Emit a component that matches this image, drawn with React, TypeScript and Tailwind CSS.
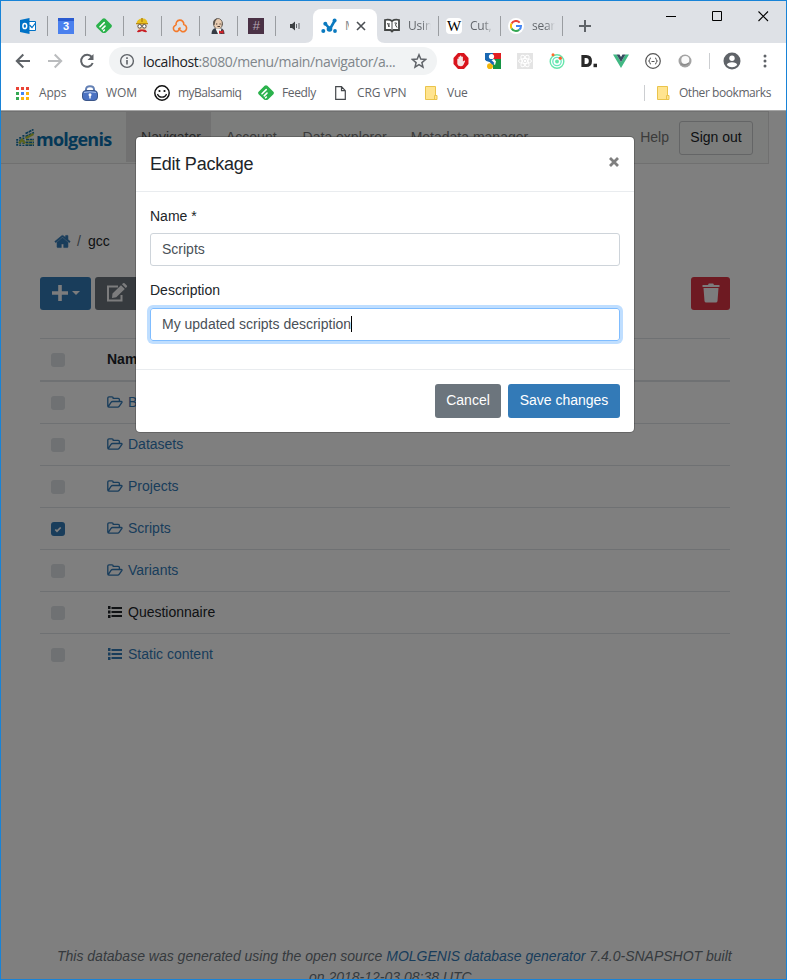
import React, { ReactNode } from "react";

type KidProps = { children?: ReactNode };

const Svg = ({ w = 16, h = 16, className = "", children }: KidProps & { w?: number; h?: number; className?: string }) => (
  <svg width={w} height={h} viewBox={`0 0 ${w} ${h}`} className={`block shrink-0 ${className}`} fill="none">
    {children}
  </svg>
);

/* ---------- favicons ---------- */
const Outlook = () => (
  <Svg>
    <path d="M8 3.500h7.500v9H8z" fill="#fff" stroke="#0072c6" />
    <path d="M9.500 7l2.500 2.500L15.500 5" stroke="#0072c6" strokeWidth="1.200" />
    <path d="M0 2l9.500-2v16L0 14z" fill="#0072c6" />
    <ellipse cx="4.800" cy="8" rx="1.900" ry="2.600" stroke="#fff" strokeWidth="1.500" />
  </Svg>
);
const Calendar = () => (
  <span className="flex h-4 w-4 flex-col items-center bg-[#4a80ee] pt-px shadow-[inset_0_3px_0_#2a5bd0]">
    <span className="font-['Liberation_Sans',sans-serif] text-[11px] font-bold leading-[15px] text-white">3</span>
  </span>
);
const Feedly = () => (
  <Svg>
    <path d="M6.600.800q1.400-1.200 2.800 0l6 6q1 1.200 0 2.400L10 14.600q-.4.400-1 .4H7q-.6 0-1-.4L.6 9.200q-1-1.200 0-2.400z" fill="#2bb24c" />
    <path d="M4 8.800L8.200 4.600M6.200 10.800l2.800-2.700M7.600 12.800l.8-.8" stroke="#fff" strokeWidth="1.600" strokeLinecap="round" />
  </Svg>
);
const Builder = () => (
  <Svg>
    <circle cx="8" cy="8.500" r="4.800" fill="#e9c49c" />
    <path d="M2.500 6Q2.500 1 8 .500T13.500 6z" fill="#e8c020" />
    <path d="M7.200 0h1.600v4H7.200zM2 5h12v1.200H2z" fill="#b98b12" />
    <circle cx="5.700" cy="8.300" r="1.800" fill="#fff" stroke="#555" /><circle cx="10.300" cy="8.300" r="1.800" fill="#fff" stroke="#555" />
    <path d="M3 14q.5-3 5-2.500 4.500-.5 5 2.500-3 .500-5-1-2 1.500-5 1z" fill="#c81e24" />
  </Svg>
);
const CloudLoop = () => (
  <Svg>
    <path d="M4.200 7.200A3.900 3.900 0 1 1 11.800 6.500a3.600 3.600 0 1 1-1.800 7.100L8 12l-1.500-2M8.500 9.500L6 13a3.100 3.100 0 1 1-1.800-5.800" stroke="#f47a2b" strokeWidth="1.600" />
  </Svg>
);
const Butler = () => (
  <Svg>
    <path d="M1.500 16q0-5 4-6h5q4 1 4 6z" fill="#353b44" />
    <ellipse cx="8" cy="5.800" rx="4.500" ry="5.300" fill="#e8cbb0" stroke="#5a534d" strokeWidth=".8" />
    <path d="M3.300 7Q2.300 1 7.500.300 4.500 3 4.500 7zM12 3.500l.8 3-1.300 1.500z" fill="#5a534d" />
    <path d="M6 6h1.300M9.500 6h1.300M7.500 8.500H10" stroke="#4b3a33" />
    <path d="M5.500 10.500L8 16h2l1.500-5.500z" fill="#f5f5f5" />
    <path d="M9 12.500l2 .8 2.500-1.300v4l-2.500-1-2 1z" fill="#d4232a" />
  </Svg>
);
const Hash = () => (
  <span className="flex h-4 w-4 items-center justify-center bg-[#4a3145]">
    <span className="font-['Liberation_Sans',sans-serif] text-[13px] italic leading-4 text-[#b3a3b0]">#</span>
  </span>
);
const Speaker = () => (
  <Svg w={11} h={10}>
    <path d="M0 3h2l3-2.500v9L2 7H0z" fill="#3c4043" />
    <path d="M6.500 3v4M9 2v6" stroke="#5f6368" />
  </Svg>
);
const MolgenisMark = () => (
  <Svg>
    <path d="M4.500 6l4.500 5 4.500-8" stroke="#0b7abf" strokeWidth="2.600" />
    <g fill="#0b7abf">
      <circle cx="2.300" cy="13" r="2" /><circle cx="4.300" cy="5.800" r="2" /><circle cx="8.500" cy="11" r="2.800" />
      <circle cx="13.600" cy="2.500" r="2" /><circle cx="14" cy="13" r="1.900" />
    </g>
  </Svg>
);
const BookMark = () => (
  <Svg>
    <path d="M1 2q4-1 7 1 3-2 7-1v10H9.500L8 13.500 6.500 12H1z" fill="#fff" stroke="#444746" strokeWidth="1.800" />
    <path d="M8 3v10M3.500 5L5 9V5M10.500 5h2l-1 2 1.500 2.500" stroke="#444746" />
  </Svg>
);
const Wiki = () => (
  <span className="flex h-4 w-4 items-center justify-center rounded-sm bg-white">
    <span className="font-['Liberation_Serif',serif] text-[15px] leading-4 text-black">W</span>
  </span>
);
const GoogleG = () => (
  <span className="flex h-4 w-4 items-center justify-center rounded-full bg-white">
    <Svg w={12} h={12}>
      <path d="M1.600 3.500A5 5 0 0 1 9.700 2.600" stroke="#ea4335" strokeWidth="2" />
      <path d="M1.600 3.500a5 5 0 0 0 0 5" stroke="#fbbc05" strokeWidth="2" />
      <path d="M1.600 8.500a5 5 0 0 0 7.600 1.200" stroke="#34a853" strokeWidth="2" />
      <path d="M6 6h5q0 2.500-1.800 3.700" stroke="#4285f4" strokeWidth="2" />
    </Svg>
  </span>
);

/* ---------- toolbar and bookmark icons ---------- */
const Arrow = ({ color, flip = false }: { color: string; flip?: boolean }) => (
  <Svg className={flip ? "rotate-180" : ""}>
    <path d="M15 8H2M8.300 1.500L1.800 8l6.500 6.500" stroke={color} strokeWidth="2" />
  </Svg>
);
const Reload = () => (
  <Svg>
    <path d="M12.800 4A6 6 0 1 0 13.700 10" stroke="#5f6368" strokeWidth="2" />
    <path d="M14.500 1v6H8.500z" fill="#5f6368" />
  </Svg>
);
const Info = () => (
  <Svg>
    <circle cx="8" cy="8" r="6.400" stroke="#5f6368" strokeWidth="1.400" />
    <path d="M8 7v4.500M8 4.300v1.600" stroke="#5f6368" strokeWidth="1.600" />
  </Svg>
);
const Star = () => (
  <Svg>
    <path d="M8 1.800l1.800 4.300 4.700.400-3.600 3.100 1.100 4.600L8 11.700l-4 2.500 1.100-4.600-3.600-3.100 4.700-.400z" stroke="#5f6368" strokeWidth="1.500" />
  </Svg>
);
const AdBlock = () => (
  <Svg>
    <path d="M5 0h6l4.500 5v6L11 16H5L.5 11V5z" fill="#d9141c" />
    <path d="M4.300 6q.7-1 1.200 0V4q.8-1 1.400 0V3q.8-1 1.500 0v1q.8-1 1.500 0v4.500l1.400-1q1 0 .7 1L10.300 12q-.8 1.300-2.500 1.300-3 0-3.500-2.300z" fill="#f6e4e4" />
  </Svg>
);
const GoogleSquare = () => (
  <Svg>
    <path d="M0 0h8v8H0z" fill="#1967b2" /><path d="M8 0h8v6H8z" fill="#e11d21" />
    <path d="M8 6h8v10H8z" fill="#159444" /><path d="M0 7h8v9H0z" fill="#fff" />
    <circle cx="6.500" cy="3.500" r="2.600" fill="#fff" /><circle cx="5" cy="13.200" r="3" fill="#f4b60b" />
    <path d="M7 7l2-1 2 2.500-1 3.500-3-2z" fill="#fff" /><path d="M1 6.500L5.500 8 8.500 11" stroke="#1967b2" strokeWidth="2.600" />
  </Svg>
);
const ReactOff = () => (
  <Svg>
    <path d="M0 0h16v16H0z" fill="#e4e4e4" />
    <g stroke="#fff"><ellipse cx="8" cy="8" rx="6.500" ry="2.500" /><ellipse cx="8" cy="8" rx="6.500" ry="2.500" transform="rotate(60 8 8)" /><ellipse cx="8" cy="8" rx="6.500" ry="2.500" transform="rotate(120 8 8)" /></g>
    <circle cx="8" cy="8" r="1.200" fill="#fff" />
  </Svg>
);
const Orbit = () => (
  <Svg>
    <circle cx="8" cy="8.500" r="6.800" stroke="#68e6aa" strokeWidth="1.400" />
    <circle cx="8" cy="8.500" r="4.200" stroke="#68e6c0" strokeWidth="1.300" />
    <circle cx="8" cy="8.500" r="1.900" fill="#68e6aa" />
    <circle cx="4" cy="1.700" r="1.500" fill="#ff6a2b" /><circle cx="11.300" cy="5.200" r="1.600" fill="#ff5a2b" />
  </Svg>
);
const DDot = () => (
  <Svg>
    <path d="M2 3.500h3.200q4.200 0 4.200 4.500t-4.200 4.500H2z" stroke="#292929" strokeWidth="3.200" /><path d="M12.500 10.700H16v3.500h-3.500z" fill="#292929" />
  </Svg>
);
const VueMark = () => (
  <Svg>
    <path d="M0 1.500h3.500L8 9l4.500-7.500H16L8 15z" fill="#41b883" /><path d="M3.500 1.500H6.500L8 4l1.500-2.500h3L8 9z" fill="#35495e" />
  </Svg>
);
const Braces = () => (
  <Svg>
    <circle cx="8" cy="8" r="7.300" stroke="#555" strokeWidth="1.200" />
    <path d="M6 5q-1.300 0-1.300 1.500T3.500 8q1.200 0 1.200 1.500T6 11M10 5q1.300 0 1.300 1.500T12.500 8q-1.200 0-1.200 1.500T10 11M6.500 8.500h3" stroke="#555" />
  </Svg>
);
const Orb = () => (
  <Svg>
    <circle cx="8" cy="8" r="6.500" fill="#a3a3a3" /><circle cx="8.300" cy="7" r="4" fill="#fafafa" /><path d="M3.500 10.500q4 3 8.500-.5" stroke="#8b8b8b" strokeWidth="1.500" />
  </Svg>
);
const Avatar = () => (
  <Svg w={18} h={18}>
    <circle cx="9" cy="9" r="8.500" fill="#5f6368" /><circle cx="9" cy="6.300" r="2.700" fill="#fff" /><path d="M3.800 13Q4.500 10.300 9 10.300T14.200 13Q12 15.200 9 15.200T3.800 13z" fill="#fff" />
  </Svg>
);
const Dots = () => (
  <Svg w={4} h={14}><circle cx="2" cy="2" r="1.500" fill="#5f6368" /><circle cx="2" cy="7" r="1.500" fill="#5f6368" /><circle cx="2" cy="12" r="1.500" fill="#5f6368" /></Svg>
);
const appColors = ["#ea4335", "#ea4335", "#ea4335", "#34a853", "#4285f4", "#fbb30b", "#34a853", "#fbb30b", "#fbb30b"];
const AppsGrid = () => (
  <Svg w={13} h={13}>{appColors.map((c, i) => <rect key={i} x={(i % 3) * 5} y={Math.floor(i / 3) * 5} width="3" height="3" fill={c} />)}</Svg>
);
const Lock = () => (
  <Svg>
    <path d="M4 7V4.500Q4 1.200 8 1.200t4 3.300V7" stroke="#6481b5" strokeWidth="2" /><rect x=".5" y="5.500" width="15" height="10" rx="3.500" fill="#4b72c2" stroke="#3b5688" />
    <path d="M2 7.500q6-1.500 12 0" stroke="#a9c0e8" /><circle cx="8" cy="9.800" r="1.500" fill="#fff" /><path d="M7.300 10h1.400v3.500H7.300z" fill="#fff" />
  </Svg>
);
const Smiley = () => (
  <Svg>
    <circle cx="8" cy="8" r="7.200" fill="#fff" stroke="#111" strokeWidth="1.500" /><circle cx="5.500" cy="6" r="1.100" fill="#111" /><circle cx="10.500" cy="6" r="1.100" fill="#111" />
    <path d="M3.500 9q1 3.200 4.500 3.200T12.500 9" stroke="#111" strokeWidth="1.300" />
  </Svg>
);
const FileIcon = () => <Svg w={11} h={14}><path d="M.7.700H6.500l3.800 4v8.600H.7zM6.500.700v4h3.800" stroke="#45484c" strokeWidth="1.200" /></Svg>;
const FolderNote = () => (
  <Svg w={13} h={14}><path d="M.5.500h10v9h1.500v4H.5z" fill="#ffe48f" stroke="#eac44c" /><path d="M9.500 13V9.500h2" stroke="#eac44c" /></Svg>
);

/* ---------- page icons ---------- */
const Home = () => (
  <svg width="17" height="17" viewBox="0 0 1792 1792" fill="currentColor" className="block">
    <path d="M1472 992v480q0 26-19 45t-45 19h-384v-384h-256v384h-384q-26 0-45-19t-19-45v-480q0-1 .5-3t.5-3l575-474 575 474q1 2 1 6zm223-69l-62 74q-8 9-21 11h-3q-13 0-21-7l-692-577-692 577q-12 8-24 7-13-2-21-11l-62-74q-8-10-7-23.500t11-21.500l719-599q32-26 76-26t76 26l244 204v-195q0-14 9-23t23-9h192q14 0 23 9t9 23v408l219 182q10 8 11 21.500t-7 23.500z" stroke="currentColor" strokeWidth="60" />
  </svg>
);
const FolderOpen = () => (
  <Svg w={16} h={12}>
    <path d="M.8 10V2Q.8.800 2 .800h3q1.200 0 1.200 1.200v.300h5q1.200 0 1.200 1.200V5M1.200 10.600L4 6.300q.6-.8 1.600-.8h8.600q1.300 0 .6 1.100l-2.500 3.600q-.6.900-1.600.9H1.800q-1 0-1-1.100" stroke="currentColor" strokeWidth="1.350" />
  </Svg>
);
const ListIcon = () => (
  <Svg w={14} h={12}><path d="M0 0h2.500v3H0zM0 4.500h2.500v3H0zM0 9h2.500v3H0zM3.500 1H14v2H3.500zM3.500 5H14v2H3.500zM3.500 9H14v2H3.500z" fill="currentColor" /></Svg>
);
const EditIcon = () => (
  <Svg w={22} h={20}>
    <path d="M12 3.500H2v14h13.500V12" stroke="#f8f9fa" strokeWidth="2" />
    <path d="M6.500 10.500L15 2.200l3.800 3.700-8.600 8.300-4.200.800zM16 1.200l1-.900q.8-.500 1.500 0l2.300 2.300q.6.800 0 1.500l-1 .9z" fill="#f8f9fa" />
  </Svg>
);
const Trash = () => (
  <Svg w={18} h={20}><path d="M.5 2H6l.8-1.500h4.400L12 2h5.500v2H.5zM1.500 5h15l-1 13q-.2 1.500-1.700 1.500H4.200q-1.500 0-1.700-1.500z" fill="#f8f9fa" /></Svg>
);
const LogoBars = () => (
  <Svg w={20} h={18}>
    <path d="M1.200 10v7M4.200 8v9M7.400 6v11" stroke="#1273a8" strokeWidth="2" strokeDasharray="1.800 .7" />
    <path d="M9.500 4.500l8-4M9.500 7.500l8.500-4M10 10.500h8M9.500 13.300H18M9.500 16.200H18" stroke="#1273a8" strokeWidth="1.700" strokeDasharray="3 .6" />
    <path d="M3 14.500l3-4 3 4M9.500 9.300L17.500 5" stroke="#b7c83a" strokeWidth="2.200" />
    <path d="M10 11.900h8M10 14.800h8" stroke="#b7c83a" strokeWidth=".9" />
  </Svg>
);

const Cell = ({ children }: KidProps) => (
  <div className="flex h-8 w-[38px] shrink-0 items-center"><div className="flex w-[37px] justify-center pr-px">{children}</div><div className="h-5 w-px bg-[#9a9da1]" /></div>
);
const TextTab = ({ icon, label }: { icon: ReactNode; label: string }) => (
  <div className="flex h-8 w-[62px] shrink-0 items-center">
    <div className="ml-[7px]">{icon}</div>
    <span className="ml-2 w-[23px] overflow-hidden bg-linear-to-r from-[#5f6368] from-60% to-[#dee1e6] bg-clip-text text-xs tracking-[-0.2px] whitespace-nowrap text-transparent">{label}</span>
    <div className="ml-auto h-5 w-px bg-[#9a9da1]" />
  </div>
);

function TabBar() {
  return (
    <div className="relative flex h-[42px] shrink-0 items-end bg-[#dee1e6]">
      <div className="flex h-[34px] items-center pl-[9px]">
        <Cell><Outlook /></Cell><Cell><Calendar /></Cell><Cell><Feedly /></Cell><Cell><Builder /></Cell>
        <Cell><CloudLoop /></Cell><Cell><Butler /></Cell><Cell><Hash /></Cell>
        <div className="flex w-[37px] justify-center pl-px"><Speaker /></div>
      </div>
      <div className="relative flex h-[34px] w-16 shrink-0 items-center rounded-t-lg bg-white pl-2">
        <svg className="absolute bottom-0 -left-2" width="8" height="8"><path d="M8 0v8H0q8 0 8-8z" fill="#fff" /></svg>
        <svg className="absolute -right-2 bottom-0" width="8" height="8"><path d="M0 0v8h8Q0 8 0 0z" fill="#fff" /></svg>
        <MolgenisMark />
        <span className="ml-2 w-[4px] overflow-hidden text-xs text-[#85888c]">M</span>
        <Svg w={10} h={10} className="ml-[7px]"><path d="M1 1l8 8M9 1L1 9" stroke="#4b4f53" strokeWidth="1.600" /></Svg>
      </div>
      <div className="flex h-[34px] items-center">
        <TextTab icon={<BookMark />} label="Using" />
        <TextTab icon={<Wiki />} label="Cut," />
        <TextTab icon={<GoogleG />} label="sear" />
        <Svg w={12} h={12} className="ml-4"><path d="M6 0v12M0 6h12" stroke="#5f6368" strokeWidth="2" /></Svg>
      </div>
      <div className="mb-[21px] ml-auto flex items-center gap-9 pr-[17px]">
        <Svg w={11} h={12}><path d="M1 6.500h10" stroke="#000" /></Svg>
        <Svg w={10} h={12}><path d="M.5 1.500h9v9h-9z" stroke="#000" /></Svg>
        <Svg w={11} h={12}><path d="M.5 1.500l9.500 9.500M10 1.500L.5 11" stroke="#000" strokeWidth="1.100" /></Svg>
      </div>
    </div>
  );
}

function Toolbar() {
  return (
    <div className="flex h-9 shrink-0 items-center bg-white pl-[14px]">
      <div className="flex gap-4"><Arrow color="#5f6368" /><Arrow color="#babcbe" flip /><Reload /></div>
      <div className="ml-[14px] flex h-7 w-[328px] shrink-0 items-center rounded-full bg-[#f1f3f4] pr-[10px] pl-[10px]">
        <Info />
        <span className="ml-2 text-[14px] tracking-[-0.35px] whitespace-nowrap text-[#80868b]"><span className="text-[#202124]">localhost</span>:8080/menu/main/navigator/a...</span>
        <div className="ml-auto"><Star /></div>
      </div>
      <div className="ml-4 flex items-center gap-4"><AdBlock /><GoogleSquare /><ReactOff /><Orbit /><DDot /><VueMark /><Braces /><Orb /></div>
      <div className="ml-4 h-4 w-px bg-[#ccced1]" />
      <div className="ml-[13px]"><Avatar /></div>
      <div className="ml-[22px]"><Dots /></div>
    </div>
  );
}

const Bookmark = ({ icon, label, cls }: { icon: ReactNode; label: string; cls: string }) => (
  <div className={`flex shrink-0 items-center whitespace-nowrap ${cls}`}>{icon}<span>{label}</span></div>
);

function Bookmarks() {
  return (
    <div className="flex h-8 shrink-0 items-center border-b border-[#a5a5a5] bg-white pb-[3px] pl-[15px] text-xs text-[#5f6368]">
      <Bookmark icon={<AppsGrid />} label="Apps" cls="w-[66px] gap-[10px] tracking-[-0.2px]" />
      <Bookmark icon={<Lock />} label="WOM" cls="w-[72px] gap-2 tracking-[-0.1px]" />
      <Bookmark icon={<Smiley />} label="myBalsamiq" cls="w-[104px] gap-2 tracking-[-0.5px]" />
      <Bookmark icon={<Feedly />} label="Feedly" cls="w-[77px] gap-2 tracking-[-0.35px]" />
      <Bookmark icon={<FileIcon />} label="CRG VPN" cls="w-[90px] gap-[11px] tracking-[-0.1px]" />
      <Bookmark icon={<FolderNote />} label="Vue" cls="gap-[9px] tracking-[-0.2px]" />
      <div className="ml-auto h-4 w-px bg-[#ccced1]" />
      <Bookmark icon={<FolderNote />} label="Other bookmarks" cls="mr-[15px] ml-3 gap-[9px] tracking-[-0.43px]" />
    </div>
  );
}

const Check = ({ on = false }: { on?: boolean }) => (
  <div className={`mt-px ml-[11px] flex h-[14px] w-[14px] shrink-0 items-center justify-center rounded-[3px] ${on ? "bg-[#337ab7]" : "bg-[#dee2e6]"}`}>
    {on && <Svg w={8} h={7}><path d="M1.300 3.500l1.700 1.700L6.700 1.500" stroke="#fff" strokeWidth="1.700" /></Svg>}
  </div>
);

const rows = [
  { name: "Backup", kind: "folder" }, { name: "Datasets", kind: "folder" }, { name: "Projects", kind: "folder" },
  { name: "Scripts", kind: "folder", on: true }, { name: "Variants", kind: "folder" },
  { name: "Questionnaire", kind: "list", dark: true }, { name: "Static content", kind: "list" },
];

function Page() {
  return (
    <div className="flex h-full flex-col">
      <div className="flex h-[53px] w-[768px] shrink-0 items-center border border-l-0 border-[#e0e1e1] bg-[#f8faf8] text-[#777]">
        <div className="flex w-[125px] items-center pl-[15px]">
          <LogoBars />
          <span className="mt-0.5 font-['Open_Sans',sans-serif] text-[18px] leading-5 font-bold tracking-[-0.75px] text-[#0a70ae]">molgenis</span>
        </div>
        <div className="-mt-px flex h-[50px] w-[85px] items-center justify-center bg-[#e2e2e2] pl-[5px] text-[#555]">Navigator</div>
        <span className="mb-0.5 ml-[15px]">Account</span><span className="mb-0.5 ml-[26px]">Data explorer</span><span className="mb-0.5 ml-[24px]">Metadata manager</span>
        <span className="mb-0.5 ml-auto">Help</span>
        <div className="mr-[15px] ml-[10px] flex h-[34px] w-[74px] items-center justify-center rounded-[3px] border border-[#c8cacc] pb-0.5 text-[#212529]">Sign out</div>
      </div>
      <div className="mt-[67px] flex h-5 items-center pl-[53px] text-[#212529]">
        <span className="text-[#337ab7]"><Home /></span><span className="ml-[6px] text-[#6c757d]">/</span><span className="ml-[7px]">gcc</span>
      </div>
      <div className="mt-[26px] ml-[39px] flex h-[33px] w-[690px] shrink-0">
        <div className="flex w-[51px] items-center justify-center gap-1 rounded-[3px] bg-[#337ab7] pb-0.5">
          <Svg w={16} h={16}><path d="M8 0v16M0 8h16" stroke="#f8f9fa" strokeWidth="3.600" /></Svg>
          <Svg w={8} h={4}><path d="M0 0h8L4 4z" fill="#f8f9fa" /></Svg>
        </div>
        <div className="ml-1 flex w-[46px] items-center justify-center rounded-[3px] bg-[#6c757d] pr-0.5 pb-0.5"><EditIcon /></div>
        <div className="ml-auto flex w-[39px] items-center justify-center rounded-[3px] bg-[#dc3545] pb-0.5"><Trash /></div>
      </div>
      <div className="mt-7 ml-[39px] w-[690px] border-t border-[#dee2e6]">
        <div className="flex h-[43px] items-center border-b-2 border-[#dee2e6]"><Check /><span className="mb-0.5 ml-[42px] font-bold text-[#212529]">Name</span></div>
        {rows.map((r, i) => (
          <div key={r.name} className={`flex h-[42px] items-center ${i < rows.length - 1 ? "border-b border-[#dee2e6]" : "pb-px"}`}>
            <Check on={r.on} />
            <div className={`mb-0.5 ml-[42px] flex items-center ${r.dark ? "text-[#212529]" : "text-[#337ab7]"}`}>
              <div className="flex w-[21px] pt-px">{r.kind === "folder" ? <FolderOpen /> : <span className="ml-px"><ListIcon /></span>}</div>
              <span>{r.name}</span>
            </div>
          </div>
        ))}
      </div>
      <div className="mt-auto -mb-[9px] flex flex-col text-[14px] leading-[21px] whitespace-nowrap text-[#6c757d] italic">
        <div className="pl-[56px]">This database was generated using the open source <span className="text-[#337ab7]">MOLGENIS database generator</span> 7.4.0-SNAPSHOT built</div>
        <div className="pl-[308px]">on 2018-12-03 08:38 UTC.</div>
      </div>
    </div>
  );
}

function Dialog() {
  return (
    <div className="absolute top-[25px] left-[134px] flex h-[297px] w-[500px] flex-col rounded-[5px] border border-black/20 bg-white bg-clip-padding text-[#212529]">
      <div className="flex h-[55px] shrink-0 items-center justify-between border-b border-[#e9ecef] px-[14px]">
        <span className="text-[18px] leading-[27px] tracking-[-0.23px]">Edit Package</span>
        <Svg w={12} h={12} className="-mt-1"><path d="M2 2l8 8M10 2l-8 8" stroke="#7f7f7f" strokeWidth="2.800" /></Svg>
      </div>
      <div className="flex flex-1 flex-col px-[14px] pt-[14px]">
        <label className="leading-[21px]">Name *</label>
        <div className="mt-[6px] flex h-[33px] shrink-0 items-center rounded-[3px] border border-[#ced4da] pb-0.5 pl-[11px] text-[#495057]">Scripts</div>
        <label className="mt-[14px] leading-[21px]">Description</label>
        <div className="mt-[7px] flex h-[33px] shrink-0 items-center rounded-[3px] border border-[#80bdff] pb-0.5 pl-[11px] text-[#495057] shadow-[0_0_0_3px_#bfdeff]">
          My updated scripts description<span className="h-4 w-px bg-black" />
        </div>
      </div>
      <div className="flex h-[63px] shrink-0 items-center justify-end gap-[7px] border-t border-[#e9ecef] px-[14px] text-white">
        <button className="h-[34px] w-[66px] rounded-[3px] bg-[#6c757d] pb-[2px]">Cancel</button>
        <button className="h-[34px] w-[112px] rounded-[3px] bg-[#337ab7] pb-[2px]">Save changes</button>
      </div>
    </div>
  );
}

export default function App() {
  return (
    <div className="flex h-[980px] w-[787px] flex-col overflow-hidden border border-[#1883d7] bg-white font-['Open_Sans','Noto_Sans',sans-serif]">
      <TabBar />
      <Toolbar />
      <Bookmarks />
      <div className="relative min-h-0 flex-1 overflow-hidden bg-white font-['Liberation_Sans',Arial,sans-serif] text-sm">
        <Page />
        <div className="absolute inset-0 bg-black/50" />
        <Dialog />
      </div>
    </div>
  );
}
